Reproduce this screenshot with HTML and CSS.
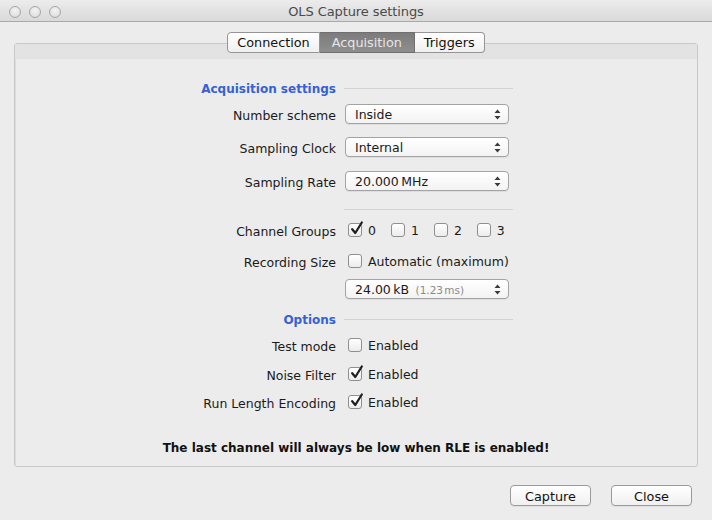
FILE: index.html
```html
<!DOCTYPE html>
<html lang="en">
<head>
<meta charset="utf-8">
<title>OLS Capture settings</title>
<link rel="stylesheet" href="styles.css">
</head>
<body>
<div class="window">
  <header class="titlebar">
    <div class="lights"><span></span><span></span><span></span></div>
    <div class="title">OLS Capture settings</div>
  </header>
  <main class="content">
    <nav class="tabs">
      <button class="tab">Connection</button><button class="tab active">Acquisition</button><button class="tab">Triggers</button>
    </nav>
    <section class="panel">
      <div class="band"></div>
      <div class="form">
        <div class="row r-head1">
          <div class="label heading">Acquisition settings</div>
          <div class="rule"></div>
        </div>
        <div class="row r-ns">
          <div class="label">Number scheme</div>
          <div class="select"><span>Inside</span><svg class="arrows" width="7" height="11" viewBox="0 0 7 11"><path d="M3.5 0.5 L6.5 4 L0.5 4 Z M0.5 7 L6.5 7 L3.5 10.5 Z" fill="#3a3a3a"/></svg></div>
        </div>
        <div class="row r-sc">
          <div class="label">Sampling Clock</div>
          <div class="select"><span>Internal</span><svg class="arrows" width="7" height="11" viewBox="0 0 7 11"><path d="M3.5 0.5 L6.5 4 L0.5 4 Z M0.5 7 L6.5 7 L3.5 10.5 Z" fill="#3a3a3a"/></svg></div>
        </div>
        <div class="row r-sr">
          <div class="label">Sampling Rate</div>
          <div class="select"><span class="num">20.000 MHz</span><svg class="arrows" width="7" height="11" viewBox="0 0 7 11"><path d="M3.5 0.5 L6.5 4 L0.5 4 Z M0.5 7 L6.5 7 L3.5 10.5 Z" fill="#3a3a3a"/></svg></div>
        </div>
        <div class="row r-sep">
          <div></div>
          <div class="rule"></div>
        </div>
        <div class="row r-cg">
          <div class="label">Channel Groups</div>
          <div class="checks">
            <label class="check"><span class="box on"><svg width="16" height="16" viewBox="0 0 16 16"><path d="M3.2 8.2 L6.3 12 L12.8 1.5" fill="none" stroke="#1e1e1e" stroke-width="2.2" stroke-linecap="round" stroke-linejoin="round"/></svg></span>0</label>
            <label class="check"><span class="box"></span>1</label>
            <label class="check"><span class="box"></span>2</label>
            <label class="check"><span class="box"></span>3</label>
          </div>
        </div>
        <div class="row r-rs">
          <div class="label">Recording Size</div>
          <label class="check"><span class="box"></span>Automatic (maximum)</label>
        </div>
        <div class="row r-size">
          <div></div>
          <div class="select"><span class="num">24.00 kB <small>(1.23 ms)</small></span><svg class="arrows" width="7" height="11" viewBox="0 0 7 11"><path d="M3.5 0.5 L6.5 4 L0.5 4 Z M0.5 7 L6.5 7 L3.5 10.5 Z" fill="#3a3a3a"/></svg></div>
        </div>
        <div class="row r-head2">
          <div class="label heading">Options</div>
          <div class="rule"></div>
        </div>
        <div class="row r-tm">
          <div class="label">Test mode</div>
          <label class="check"><span class="box"></span>Enabled</label>
        </div>
        <div class="row r-nf">
          <div class="label">Noise Filter</div>
          <label class="check"><span class="box on"><svg width="16" height="16" viewBox="0 0 16 16"><path d="M3.2 8.2 L6.3 12 L12.8 1.5" fill="none" stroke="#1e1e1e" stroke-width="2.2" stroke-linecap="round" stroke-linejoin="round"/></svg></span>Enabled</label>
        </div>
        <div class="row r-rle">
          <div class="label">Run Length Encoding</div>
          <label class="check"><span class="box on"><svg width="16" height="16" viewBox="0 0 16 16"><path d="M3.2 8.2 L6.3 12 L12.8 1.5" fill="none" stroke="#1e1e1e" stroke-width="2.2" stroke-linecap="round" stroke-linejoin="round"/></svg></span>Enabled</label>
        </div>
      </div>
      <p class="warning">The last channel will always be low when RLE is enabled!</p>
    </section>
    <footer class="actions">
      <button class="btn">Capture</button>
      <button class="btn">Close</button>
    </footer>
  </main>
</div>
</body>
</html>
```
FILE: styles.css
```css
* { box-sizing: border-box; }
html, body { margin: 0; padding: 0; }
body {
  width: 712px;
  height: 520px;
  background: #ececec;
  font-family: "DejaVu Sans", "Liberation Sans", sans-serif;
  font-size: 12.5px;
  color: #1a1a1a;
  overflow: hidden;
}
.window { width: 712px; height: 520px; background: #ececec; }

.titlebar {
  height: 22px;
  position: relative;
  display: flex;
  align-items: center;
  justify-content: center;
  background: linear-gradient(#ececec, #d9d9d9);
  border-bottom: 1px solid #a9a9a9;
}
.lights {
  position: absolute;
  left: 9px;
  top: 6px;
  display: flex;
  gap: 8px;
}
.lights span {
  width: 12px;
  height: 12px;
  border-radius: 50%;
  border: 1px solid #a6a6a6;
  background: radial-gradient(circle at 50% 35%, #f3f3f3, #d8d8d8);
}
.title {
  font-size: 13px;
  color: #4a4a4a;
  letter-spacing: -0.1px;
  padding-top: 1px;
}

.content { display: flex; flex-direction: column; }

.tabs {
  display: flex;
  justify-content: center;
  margin-top: 10px;
  position: relative;
  z-index: 1;
}
.tab {
  height: 21px;
  padding: 1px 9px 0;
  font-family: inherit;
  font-size: 12.8px;
  color: #111;
  background: linear-gradient(#ffffff, #f0f0f0);
  border: 1px solid #959595;
  border-left: none;
  margin: 0;
  line-height: 18px;
}
.tab:first-child { border-left: 1px solid #959595; border-radius: 4px 0 0 4px; }
.tab:last-child { border-radius: 0 4px 4px 0; }
.tab.active {
  background: linear-gradient(#7c7c7c, #8e8e8e);
  color: #e6e6e6;
  border-color: #6f6f6f;
  padding: 1px 12px 0;
}

.panel {
  margin: -10px 14px 0;
  border: 1px solid #c8c8c8;
  border-radius: 3px;
  background: #ececec;
  box-shadow: inset 1px 1px 0 #dcdcdc;
}
.band { height: 15px; background: #e3e3e3; }

.form { display: flex; flex-direction: column; }
.row {
  display: grid;
  grid-template-columns: 321px 167px;
  column-gap: 8px;
  height: 20px;
  align-items: center;
}
.label { text-align: right; white-space: nowrap; padding-top: 2px; }
.heading { color: #3462d4; font-weight: bold; font-size: 12px; }
.rule { height: 1px; background: #d2d2d2; width: 169px; }

.r-head1 { margin-top: 19px; }
.r-ns { margin-top: 6px; }
.r-sc { margin-top: 13px; }
.r-sr { margin-top: 14px; }
.r-sep { margin-top: 8px; }
.r-cg { margin-top: 1px; }
.r-rs { margin-top: 11px; }
.r-size { margin-top: 8px; }
.r-head2 { margin-top: 10px; }
.r-tm { margin-top: 6px; }
.r-nf { margin-top: 9px; }
.r-rle { margin-top: 8px; }

.select {
  height: 20px;
  width: 164px;
  margin-left: 1px;
  border: 1px solid #a3a3a3;
  border-radius: 4px;
  background: linear-gradient(#ffffff, #f3f3f3);
  box-shadow: 0 1px 0 rgba(0,0,0,0.06);
  display: flex;
  align-items: center;
  justify-content: space-between;
  padding: 1px 7px 0 9px;
  white-space: nowrap;
}
.num { word-spacing: -1.5px; }
.select small { font-size: 10.5px; color: #8a8a8a; word-spacing: -2px; margin-left: 4px; }

.checks { display: flex; gap: 15px; }
.check {
  display: flex;
  align-items: center;
  white-space: nowrap;
  margin-left: 4px;
  padding-top: 1px;
}
.checks .check { margin-left: 0; }
.checks .check:first-child { margin-left: 4px; }
.box {
  width: 14px;
  height: 14px;
  border: 1px solid #8f8f8f;
  border-radius: 3px;
  background: linear-gradient(#ffffff, #ececec);
  margin-right: 6px;
  position: relative;
  flex: none;
  margin-top: -1px;
}
.box svg { position: absolute; left: 0; top: -3px; }

.warning {
  margin: 25px 0 8px;
  height: 21px;
  line-height: 22px;
  text-align: center;
  font-weight: bold;
  font-size: 12px;
  color: #111;
}

.actions {
  display: flex;
  justify-content: flex-end;
  gap: 20px;
  padding-right: 20px;
  margin-top: 18px;
}
.btn {
  width: 81px;
  height: 21px;
  font-family: inherit;
  font-size: 12.8px;
  color: #111;
  border: 1px solid #9a9a9a;
  border-radius: 4px;
  background: linear-gradient(#ffffff, #f0f0f0);
  box-shadow: 0 1px 0 rgba(0,0,0,0.05);
  padding: 1px 0 0;
}
```
